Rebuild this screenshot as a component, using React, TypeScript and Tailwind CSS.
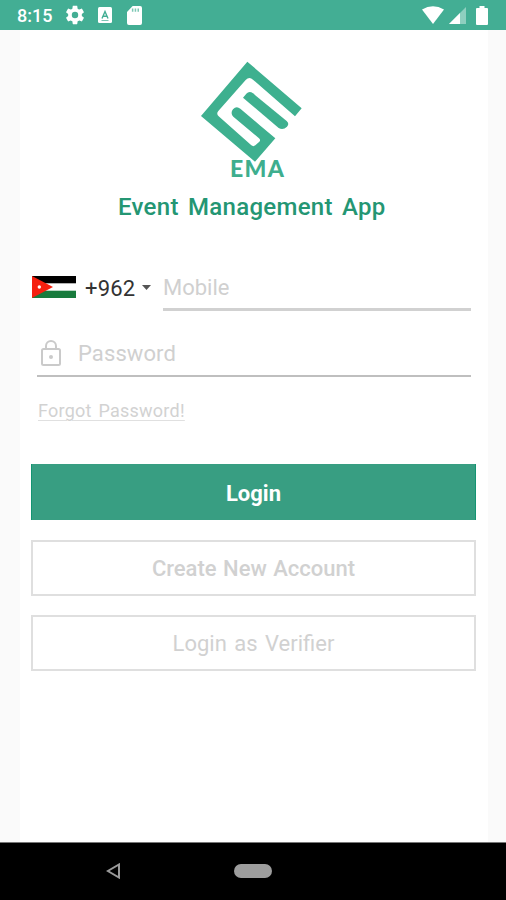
import React from "react";

function StatusBar() {
  return (
    <header className="h-[30px] bg-[#43ae94] shrink-0 flex items-center justify-between pl-[17px] pr-[17px] text-white">
      <div className="flex items-center">
        <span className="w-[47px] text-[18px] leading-[30px] font-medium whitespace-nowrap pt-[2px]">8:15</span>
        <svg width="22" height="22" viewBox="0 0 24 24" fill="currentColor">
          <path d="M19.43 12.98c.04-.32.07-.64.07-.98s-.03-.66-.07-.98l2.11-1.65c.19-.15.24-.42.12-.64l-2-3.46c-.12-.22-.39-.3-.61-.22l-2.49 1c-.52-.4-1.08-.73-1.69-.98l-.38-2.65C14.46 2.18 14.25 2 14 2h-4c-.25 0-.46.18-.49.42l-.38 2.65c-.61.25-1.17.59-1.69.98l-2.49-1c-.23-.09-.49 0-.61.22l-2 3.46c-.13.22-.07.49.12.64l2.11 1.65c-.04.32-.07.65-.07.98s.03.66.07.98l-2.11 1.65c-.19.15-.24.42-.12.64l2 3.46c.12.22.39.3.61.22l2.49-1c.52.4 1.08.73 1.69.98l.38 2.65c.03.24.24.42.49.42h4c.25 0 .46-.18.49-.42l.38-2.65c.61-.25 1.17-.59 1.69-.98l2.49 1c.23.09.49 0 .61-.22l2-3.46c.12-.22.07-.49-.12-.64l-2.11-1.65zM12 15.5a3.5 3.5 0 1 1 0-7 3.5 3.5 0 0 1 0 7z" />
        </svg>
        <svg className="ml-[12px]" width="14" height="16" viewBox="0 0 14 16">
          <rect width="14" height="16" rx="1.5" fill="white" />
          <path d="M4 11.5 7 4.5l3 7M5.2 9.2h3.6" fill="none" stroke="#43ae94" strokeWidth="1.4" />
          <path d="M3.5 13.5h7" stroke="#43ae94" strokeWidth=".7" />
        </svg>
        <svg className="ml-[15px]" width="15" height="19" viewBox="0 0 16 19" preserveAspectRatio="none">
          <path d="M6 0h8q2 0 2 2v15q0 2-2 2H2q-2 0-2-2V6z" fill="white" />
          <path d="M6 2.5v3.2M9 2.5v3.2M12 2.5v3.2" stroke="#7cc7b4" strokeWidth="1.6" />
        </svg>
      </div>
      <div className="flex items-center">
        <svg width="22" height="18" viewBox="0 0 22 18">
          <path d="M0 3.5Q11-3 22 3.5L11 18z" fill="white" />
        </svg>
        <svg className="ml-[5px]" width="17" height="17" viewBox="0 0 17 17">
          <path d="M17 0v17H0z" fill="#8ecfbf" />
          <path d="M11 6v11H0z" fill="white" />
        </svg>
        <svg className="ml-[10px] mr-[1px]" width="12" height="19" viewBox="0 0 12 19">
          <path d="M3.5 0h5v2H11q1 0 1 1v15q0 1-1 1H1q-1 0-1-1V3q0-1 1-1h2.5z" fill="white" />
        </svg>
      </div>
    </header>
  );
}

function Logo() {
  return (
    <svg className="ml-[170px] mt-[20px] shrink-0" width="125" height="112" viewBox="0 0 375 336" fill="#3eb08f">
      <path d="M172 35 335 175 315 199 189 89Q178 78 167 90L85 183Q78 191 86 199L184 286Q190 291 196 286L208 275Q213 270 207 265L130 200Q120 190 129 178Q139 166 151 176L212 228 256 265 195 335 33 198Z" />
      <path d="M159 143 169 131Q178 122 189 130L290 213Q299 221 291 230 279 242 266 234Z" />
    </svg>
  );
}

function JordanFlag() {
  return (
    <svg width="44" height="22" viewBox="0 0 44 22" className="shrink-0">
      <rect width="44" height="22" fill="#fff" />
      <rect width="44" height="7.3" fill="#000" />
      <rect y="14.7" width="44" height="7.3" fill="#187b3d" />
      <path d="M0 0 21 11 0 22z" fill="#f5200f" />
      <circle cx="7.3" cy="11" r="1.7" fill="#fff" />
    </svg>
  );
}

export default function App() {
  return (
    <div className="w-[506px] h-[900px] flex flex-col bg-[#fafafa] overflow-hidden font-['Roboto',sans-serif]">
      <StatusBar />
      <main className="h-[812px] w-[468px] ml-[20px] bg-white flex flex-col shrink-0">
        <Logo />
        <div className="ml-[210px] -mt-[6px] h-[24px] text-[23px] leading-[24px] font-black font-['Lato',sans-serif] text-[#3eae8e] tracking-[1.3px]">EMA</div>
        <h1 className="ml-[98px] mt-[11px] h-[32px] text-[24px] leading-[33px] font-medium text-[#249673] whitespace-nowrap tracking-[0.3px] [word-spacing:3px]">Event Management App</h1>

        <div className="mt-[41px] ml-[12px] w-[439px] h-[47px] flex">
          <div className="w-[131px] h-[46px] flex items-center shrink-0">
            <JordanFlag />
            <span className="ml-[9px] w-[50px] text-[22px] text-[#333] whitespace-nowrap pt-[2px] tracking-[0.2px]">+962</span>
            <svg className="ml-[7px]" width="9" height="5" viewBox="0 0 9 5"><path d="M0 0h9L4.5 5z" fill="#555" /></svg>
          </div>
          <div className="flex-1 h-[47px] border-b-[3px] border-[#d1d1d1] text-[22px] leading-[48px] text-[#d0d0d0]">Mobile</div>
        </div>

        <div className="mt-[22px] ml-[17px] w-[434px] h-[44px] border-b-2 border-[#bfbfbf] flex items-center">
          <svg className="ml-[4px] mb-[3px]" width="20" height="26" viewBox="0 0 20 26" fill="none" stroke="#cacaca" strokeWidth="2">
            <rect x="1" y="9" width="18" height="16" rx="1.5" />
            <path d="M5 9V6a5 5 0 0 1 10 0v3" />
            <circle cx="10" cy="17" r="2" fill="#cacaca" stroke="none" />
          </svg>
          <span className="ml-[17px] text-[22px] leading-[38px] text-[#d0d0d0] tracking-[0.1px]">Password</span>
        </div>

        <a className="ml-[18px] mt-[22px] h-[24px] self-start text-[18px] leading-[24px] text-[#d2d2d2] whitespace-nowrap tracking-[0.25px] [word-spacing:2px] underline decoration-1 decoration-[#e0e0e0] underline-offset-[3px]">Forgot Password!</a>

        <div className="ml-[11px] mt-[41px] w-[445px] flex flex-col text-center text-[22px]">
          <button className="h-[56px] pt-[2px] bg-[#389e82] border-x border-[#149472] text-white font-bold">Login</button>
          <button className="mt-[20px] h-[56px] border-2 border-[#dfdfdf] text-[#d1d1d1] font-medium [word-spacing:1px]">Create New Account</button>
          <button className="mt-[19px] h-[56px] border-2 border-[#dfdfdf] text-[#d1d1d1] [word-spacing:2px]">Login as Verifier</button>
        </div>
      </main>
      <footer className="h-[58px] bg-black border-t border-[#777] flex items-center pb-[2px] shrink-0">
        <svg className="ml-[106px]" width="14" height="16" viewBox="0 0 14 16"><path d="M13 1.5v13L1.8 8z" fill="none" stroke="#999" strokeWidth="2" /></svg>
        <div className="ml-[114px] w-[38px] h-[14px] rounded-full bg-[#9d9d9d]" />
      </footer>
    </div>
  );
}
